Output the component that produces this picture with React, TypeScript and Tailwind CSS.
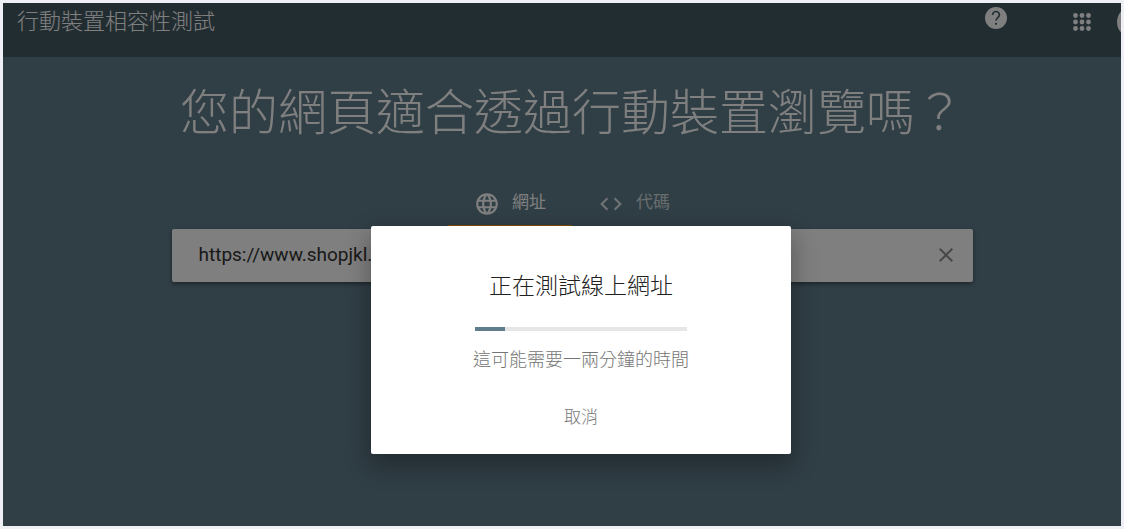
import React, { useState } from "react";
import { MdClose, MdCode, MdLanguage } from "react-icons/md";

type TabId = "url" | "code";

const tabs = [
  { id: "url" as TabId, label: "網址", Icon: MdLanguage },
  { id: "code" as TabId, label: "代碼", Icon: MdCode },
];

const HelpIcon = () => (
  <svg className="size-[22px]" viewBox="0 0 22 22" fill="none">
    <circle cx={11} cy={11} r={11} fill="currentColor" />
    <path
      d="M7.6 7.9a3.4 3.4 0 1 1 6.8 0c0 2.4-3.4 2.9-3.4 5.7"
      stroke="#455a64"
      strokeWidth={1.7}
    />
    <circle cx={11} cy={16.8} r={1.1} fill="#455a64" />
  </svg>
);

const AppsIcon = () => (
  <svg className="size-6" viewBox="0 0 24 24" fill="currentColor">
    {[5.5, 12, 18.5].map((y) =>
      [5.5, 12, 18.5].map((x) => <circle key={`${x}-${y}`} cx={x} cy={y} r={2.4} />)
    )}
  </svg>
);

const TopBar = () => (
  <header className="flex h-[54px] items-start justify-between bg-[#455a64] pl-3.5 text-white">
    <h1 className="pt-[3px] text-[22px] leading-8 font-light">行動裝置相容性測試</h1>
    <div className="flex shrink-0">
      <button type="button" aria-label="說明" className="mt-1 mr-[63px] h-[22px]">
        <HelpIcon />
      </button>
      <button type="button" aria-label="應用程式" className="mt-[7px] mr-[23px] h-6">
        <AppsIcon />
      </button>
      <button
        type="button"
        aria-label="帳戶"
        className="-mr-7 mt-[3px] size-8 rounded-full bg-white"
      />
    </div>
  </header>
);

const ProgressDialog = ({ value, onCancel }: { value: number; onCancel: () => void }) => (
  <div className="absolute inset-0 flex items-start justify-center overflow-hidden bg-black/50 pt-[223px] pl-[38px]">
    <div
      role="dialog"
      aria-labelledby="dialog-title"
      className="flex w-[420px] flex-col items-center rounded-xs bg-white pt-[45px] pb-[17px] shadow-[0_10px_24px_2px_rgba(0,0,0,0.3)]"
    >
      <h3 id="dialog-title" className="text-[23px] leading-8 font-light text-[#212121]">
        正在測試線上網址
      </h3>
      <div
        role="progressbar"
        aria-valuenow={value}
        className="mt-6 h-1 w-[212px] bg-[#e6e6e6]"
      >
        <div className="h-full bg-[#607d8b]" style={{ width: `${value}%` }} />
      </div>
      <p className="mt-[17px] text-[18px] leading-6 font-light text-[#757575]">
        這可能需要一兩分鐘的時間
      </p>
      <button
        type="button"
        onClick={onCancel}
        className="mt-[27px] h-[38px] px-4 text-[17px] font-light text-[#757575]"
      >
        取消
      </button>
    </div>
  </div>
);

const App = () => {
  const [active, setActive] = useState<TabId>("url");
  const [url, setUrl] = useState("https://www.shopjkl.com");
  const [testing, setTesting] = useState(true);

  return (
    <div className="h-screen bg-[#eef0f6] p-[3px] font-[Roboto,'Noto_Sans_CJK_TC',sans-serif]">
      <div className="relative h-full overflow-hidden bg-[#607d8b]">
        <TopBar />
        <main className="flex flex-col items-center pl-5">
          <h2 className="mt-[21px] text-[49px] leading-[72px] font-light whitespace-nowrap text-white">
            您的網頁適合透過行動裝置瀏覽嗎？
          </h2>
          <div role="tablist" className="mt-[30px] flex">
            {tabs.map(({ id, label, Icon }) => (
              <button
                key={id}
                type="button"
                role="tab"
                aria-selected={active === id}
                onClick={() => setActive(id)}
                className={`flex h-[47px] w-[124px] items-center justify-center gap-3 border-b-2 pt-[3px] text-[17px] text-white ${
                  active === id ? "border-[#ff9800]" : "border-transparent"
                }`}
              >
                <Icon className={`size-[26px] ${active === id ? "" : "opacity-80"}`} />
                <span className={`pb-0.5 ${active === id ? "" : "opacity-70"}`}>
                  {label}
                </span>
              </button>
            ))}
          </div>
          <div className="mt-0.5 flex h-[53px] w-full max-w-[801px] items-center rounded-xs bg-white pr-[15px] pb-px pl-[27px] shadow-[0_2px_4px_rgba(0,0,0,0.4)]">
            <input
              type="text"
              aria-label="網址"
              value={url}
              onChange={(e) => setUrl(e.target.value)}
              className="min-w-0 flex-1 bg-transparent text-[19px] text-[#333333] outline-none"
            />
            <button type="button" aria-label="清除" onClick={() => setUrl("")}>
              <MdClose className="size-6 text-[#8f8f8f]" />
            </button>
          </div>
        </main>
        {testing && <ProgressDialog value={14} onCancel={() => setTesting(false)} />}
      </div>
    </div>
  );
};

export default App;
